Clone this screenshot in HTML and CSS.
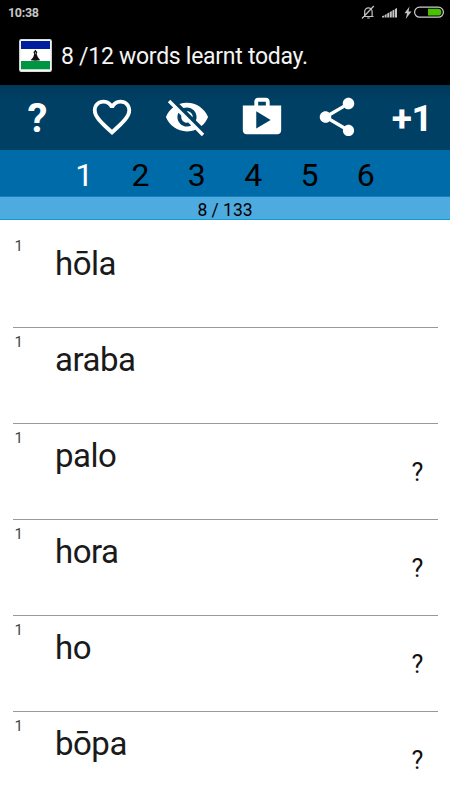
FILE: index.html
```html
<!DOCTYPE html>
<html lang="en">
<head>
<meta charset="utf-8">
<title>Words</title>
<link rel="stylesheet" href="styles.css">
</head>
<body>
<div class="status">
  <span class="clock">10:38</span>
  <svg class="status-icons" viewBox="0 0 88 16" width="88" height="16">
    <g fill="none" stroke="#c4c4c4" stroke-width="1.2">
      <path d="M3.3 11.5h10.2M4.7 11V6.5a3.7 3.7 0 0 1 7.4 0V11M7.2 13h2.6M13.8 1 2 13.5"/>
    </g>
    <g fill="#c4c4c4">
      <path d="M22 12.5v-1.2l2-.8v2zM24.6 12.5v-2.4l2-1v3.4zM27.2 12.5V8.6l2-1v4.9zM29.8 12.5V6.9l2-1v6.6zM32.4 12.5V5.4l2-1v8.1zM35 12.5V3.9l2-1v9.6z"/>
      <path d="M49.5 1.5 44.5 8.2h2.6L45.7 14 51.5 6.5h-3z"/>
    </g>
    <rect x="54.6" y="2.2" width="28.8" height="10" rx="5" fill="none" stroke="#d0d0d0" stroke-width="1.2"/>
    <path d="M68 3.8h10a3.4 3.4 0 0 1 0 6.8H68z" fill="#4ac000"/>
  </svg>
</div>
<header class="title-bar">
  <svg class="flag" viewBox="0 0 33 33" width="33" height="33">
    <rect x=".7" y=".7" width="31.6" height="31.6" rx="1.6" fill="#fff" stroke="#ddd" stroke-width="1.2"/>
    <path fill="#001f9c" d="M2 2h29v8H2z"/>
    <path fill="#009543" d="M2 22h29v8.3H2z"/>
    <path fill="#111" d="M15.8 11h1.2l.2 1 1.2 1-.8 2 1.2 3 2.4 3.2-4.8.6-4.8-.6 2.6-3 1-3.2-.8-2 1.3-1z"/>
    <path fill="#999" d="M16 13h.9v2H16z"/>
  </svg>
  <span class="title">8 /12 words learnt today.</span>
</header>
<nav class="toolbar">
  <span class="tool help">?</span>
  <span class="tool"><svg viewBox="0 0 24 24"><path d="M16.5 3c-1.74 0-3.41.81-4.5 2.09C10.91 3.81 9.24 3 7.5 3 4.42 3 2 5.42 2 8.5c0 3.78 3.4 6.86 8.55 11.54L12 21.35l1.45-1.32C18.6 15.36 22 12.28 22 8.5 22 5.42 19.58 3 16.5 3zm-4.4 15.55l-.1.1-.1-.1C7.14 14.24 4 11.39 4 8.5 4 6.5 5.5 5 7.5 5c1.54 0 3.04.99 3.57 2.36h1.87C13.46 5.99 14.96 5 16.5 5c2 0 3.5 1.5 3.5 3.5 0 2.89-3.14 5.74-7.9 10.05z"/></svg></span>
  <span class="tool"><svg viewBox="0 0 24 24"><path d="M12 7c2.76 0 5 2.24 5 5 0 .65-.13 1.26-.36 1.83l2.92 2.92c1.51-1.26 2.7-2.89 3.43-4.75-1.73-4.39-6-7.5-11-7.5-1.4 0-2.74.25-3.98.7l2.16 2.16C10.74 7.13 11.35 7 12 7zM2 4.27l2.28 2.28.46.46C3.08 8.3 1.78 10.02 1 12c1.73 4.39 6 7.5 11 7.5 1.55 0 3.03-.3 4.38-.84l.42.42L19.73 22 21 20.73 3.27 3 2 4.27zM7.53 9.8l1.55 1.55c-.05.21-.08.43-.08.65 0 1.66 1.34 3 3 3 .22 0 .44-.03.65-.08l1.55 1.55c-.67.33-1.41.53-2.2.53-2.76 0-5-2.24-5-5 0-.79.2-1.53.53-2.2zm4.31-.78l3.15 3.15.02-.16c0-1.66-1.34-3-3-3l-.17.01z"/></svg></span>
  <span class="tool"><svg viewBox="0 0 24 24"><path d="M16 6V4c0-1.11-.89-2-2-2h-4c-1.11 0-2 .89-2 2v2H2v13c0 1.11.89 2 2 2h16c1.11 0 2-.89 2-2V6h-6zm-6-2h4v2h-4V4zM9 18V9l7.5 4.5L9 18z"/></svg></span>
  <span class="tool"><svg viewBox="0 0 24 24"><path d="M18 16.08c-.76 0-1.44.3-1.96.77L8.91 12.7c.05-.23.09-.46.09-.7s-.04-.47-.09-.7l7.05-4.11c.54.5 1.25.81 2.04.81 1.66 0 3-1.34 3-3s-1.34-3-3-3-3 1.34-3 3c0 .24.04.47.09.7L8.04 9.81C7.5 9.31 6.79 9 6 9c-1.66 0-3 1.34-3 3s1.34 3 3 3c.79 0 1.5-.31 2.04-.81l7.12 4.16c-.05.21-.08.43-.08.65 0 1.61 1.31 2.92 2.92 2.92s2.92-1.31 2.92-2.92-1.31-2.92-2.92-2.92z"/></svg></span>
  <span class="tool plus">+1</span>
</nav>
<nav class="tabs">
  <span class="tab active">1</span><span class="tab">2</span><span class="tab">3</span><span class="tab">4</span><span class="tab">5</span><span class="tab">6</span>
</nav>
<div class="count">8 / 133</div>
<main class="list">
  <div class="row"><span class="level">1</span><span class="word">hōla</span></div>
  <div class="row"><span class="level">1</span><span class="word">araba</span></div>
  <div class="row"><span class="level">1</span><span class="word">palo</span><span class="hint">?</span></div>
  <div class="row"><span class="level">1</span><span class="word">hora</span><span class="hint">?</span></div>
  <div class="row"><span class="level">1</span><span class="word">ho</span><span class="hint">?</span></div>
  <div class="row"><span class="level">1</span><span class="word">bōpa</span><span class="hint">?</span></div>
</main>
</body>
</html>
```
FILE: styles.css
```css
* { box-sizing: border-box; }
body {
  margin: 0;
  width: 450px;
  height: 800px;
  overflow: hidden;
  display: flex;
  flex-direction: column;
  background: #fff;
  font-family: Roboto, "Liberation Sans", sans-serif;
}
.status {
  flex: none;
  height: 28px;
  padding: 5px 2px 0 8px;
  display: flex;
  justify-content: space-between;
  background: #000;
}
.clock {
  font-size: 12.5px;
  font-weight: 700;
  line-height: 16px;
  letter-spacing: -0.3px;
  color: #c6c6c6;
}
.status-icons { display: block; }
.title-bar {
  flex: none;
  height: 57px;
  padding: 0 0 3px 19px;
  display: flex;
  align-items: center;
  gap: 9px;
  background: #000;
}
.flag { flex: none; }
.title {
  font-size: 23px;
  line-height: 28px;
  padding-top: 4px;
  letter-spacing: -0.28px;
  color: #f4f4f4;
  white-space: nowrap;
}
.toolbar {
  flex: none;
  height: 65px;
  display: grid;
  grid-template-columns: repeat(6, 75px);
  align-items: center;
  background: linear-gradient(#003a5b, #004064 25%);
  color: #fff;
}
.tool { display: flex; justify-content: center; }
.tool svg {
  width: 46px;
  height: 46px;
  margin: 0 1px 1px 0;
  fill: #fff;
}
.help, .plus { font-weight: 700; line-height: 44px; }
.help { font-size: 40px; padding-top: 3px; }
.plus { font-size: 37px; padding: 3px 1px 0 0; letter-spacing: -0.5px; }
.tabs {
  flex: none;
  height: 47px;
  padding: 0 56px;
  display: grid;
  grid-template-columns: repeat(6, 1fr);
  background: #006ba9;
  box-shadow: inset 0 -1px #1b7fbd;
}
.tab {
  font-size: 32px;
  line-height: 50px;
  text-align: center;
  color: #000;
}
.active { color: #fff; }
.count {
  flex: none;
  height: 23px;
  font-size: 17.5px;
  line-height: 27px;
  text-align: center;
  color: #000;
  background: #4eabdf;
  border-bottom: 1px solid #119bd5;
}
.list { padding: 12px 12.5px 0; }
.row {
  height: 96px;
  display: grid;
  grid-template-columns: 42.5px 1fr 20px;
  align-items: start;
  border-bottom: 1px solid #999;
  color: #1a1a1a;
}
.level {
  font-size: 15px;
  line-height: 18px;
  padding: 5px 0 0 2px;
  color: #444;
}
.word {
  font-size: 33px;
  line-height: 40px;
  padding-top: 12px;
  letter-spacing: -0.5px;
}
.hint {
  font-size: 25px;
  line-height: 30px;
  padding-top: 34px;
  margin-left: -6px;
  color: #111;
}
```
